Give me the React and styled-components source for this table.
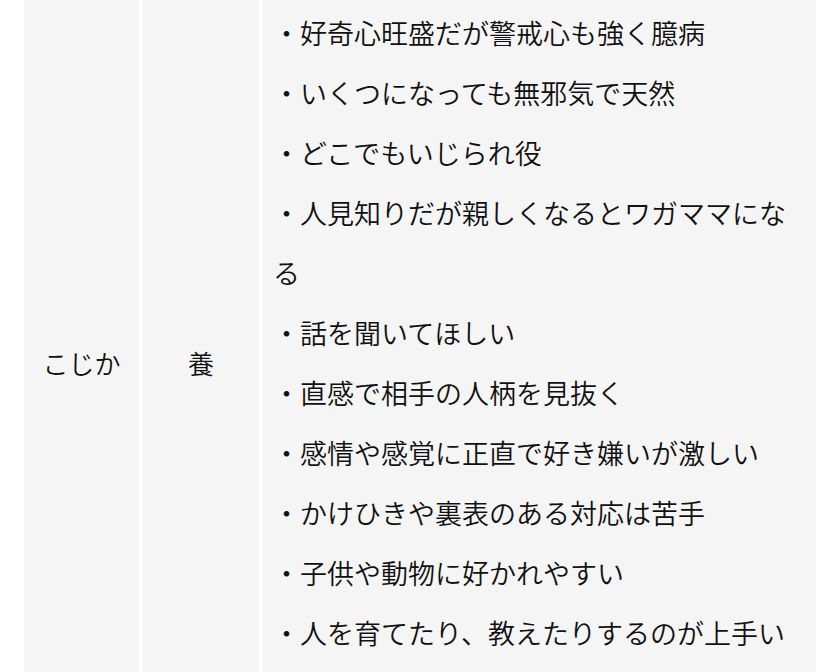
import React from "react";
import styled, { createGlobalStyle } from "styled-components";

const Global = createGlobalStyle`
  html, body {
    margin: 0;
    padding: 0;
    background: #ffffff;
    height: 672px;
    overflow: hidden;
  }
  body {
    font-family: "Noto Sans CJK JP", "Noto Sans", sans-serif;
    color: #111111;
  }
`;

const Table = styled.div`
  display: grid;
  grid-template-columns: 115px 116px 553px;
  column-gap: 4px;
  padding-left: 24px;
  align-items: stretch;
`;

const CenterCell = styled.div`
  background: #f5f5f5;
  display: flex;
  align-items: center;
  justify-content: center;
  font-size: 26px;
  font-weight: 350;
  line-height: 60px;
`;

const ListCell = styled.div`
  background: #f5f5f5;
  padding: 3px 16px 63px 10px;
`;

const List = styled.ul`
  list-style: none;
  margin: 0;
  padding: 0;
`;

const Item = styled.li`
  font-size: 27px;
  font-weight: 350;
  line-height: 60px;
`;

const traits = [
  "好奇心旺盛だが警戒心も強く臆病",
  "いくつになっても無邪気で天然",
  "どこでもいじられ役",
  "人見知りだが親しくなるとワガママになる",
  "話を聞いてほしい",
  "直感で相手の人柄を見抜く",
  "感情や感覚に正直で好き嫌いが激しい",
  "かけひきや裏表のある対応は苦手",
  "子供や動物に好かれやすい",
  "人を育てたり、教えたりするのが上手い",
];

export default function App() {
  return (
    <>
      <Global />
      <Table>
        <CenterCell>こじか</CenterCell>
        <CenterCell>養</CenterCell>
        <ListCell>
          <List>
            {traits.map((t) => (
              <Item key={t}>・{t}</Item>
            ))}
          </List>
        </ListCell>
      </Table>
    </>
  );
}
